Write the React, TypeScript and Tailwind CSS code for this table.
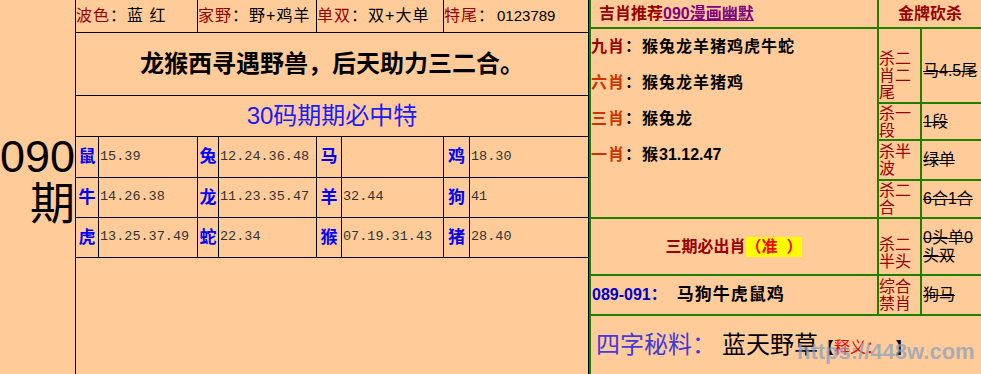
import React from "react";

type KillProps = {
  rowCls: string;
  labelCls: string;
  valueCls: string;
  label: string;
  value: string;
};

function Kill({ rowCls, labelCls, valueCls, label, value }: KillProps) {
  return (
    <div className={`flex ${rowCls}`}>
      <div
        className={`flex w-[43px] shrink-0 items-center border-r-2 border-[#1f7f00] text-[16px] leading-[17px] text-[#990000] ${labelCls}`}
      >
        <div className="w-full">{label}</div>
      </div>
      <div className={`flex flex-1 items-center pl-[1px] text-[16px] leading-[18px] line-through ${valueCls}`}>
        <div className="w-full">{value}</div>
      </div>
    </div>
  );
}

function TopCell({ label, value, last }: { label: string; value: React.ReactNode; last?: boolean }) {
  return (
    <div className={`flex items-center tracking-[1px] ${last ? "" : "border-r border-black"}`}>
      <span className="text-[#990000]">{label}</span>
      <span>：</span>
      {value}
    </div>
  );
}

const rows: [string, string, string, string, string, string, string, string][] = [
  ["鼠", "15.39", "兔", "12.24.36.48", "马", "", "鸡", "18.30"],
  ["牛", "14.26.38", "龙", "11.23.35.47", "羊", "32.44", "狗", "41"],
  ["虎", "13.25.37.49", "蛇", "22.34", "猴", "07.19.31.43", "猪", "28.40"],
];

export default function App() {
  return (
    <div className="relative flex h-[374px] w-[981px] overflow-hidden bg-[#ffcc99] font-['Liberation_Sans','Noto_Sans_CJK_SC',sans-serif] text-black">
      {/* issue number */}
      <div className="flex w-[75px] shrink-0 flex-col items-end justify-center pb-3 text-[45px] leading-[48px]">
        <div>090</div>
        <div>期</div>
      </div>

      {/* left table */}
      <div className="flex w-[514px] shrink-0 flex-col border-x border-black">
        <div className="grid h-[33px] grid-cols-[122px_119px_127px_1fr] border-b border-black text-[16px]">
          <TopCell label="波色" value={<span>蓝 红</span>} />
          <TopCell label="家野" value={<span>野+鸡羊</span>} />
          <TopCell label="单双" value={<span>双+大单</span>} />
          <TopCell label="特尾" value={<span className="ml-[2px] text-[15px] tracking-[0px]">0123789</span>} last />
        </div>
        <div className="flex h-[63px] items-center justify-center border-b border-black text-[24px] font-bold">
          龙猴西寻遇野兽，后天助力三二合。
        </div>
        <div className="flex h-[41px] items-center justify-center border-b border-black text-[24px] text-[#1a1aff]">
          30码期期必中特
        </div>
        {rows.map((r, i) => (
          <div
            key={i}
            className={`grid grid-cols-[23px_99px_21px_98px_25px_102px_26px_1fr] border-b border-black ${
              i === 0 ? "h-[41px]" : "h-[40px]"
            }`}
          >
            {r.map((c, j) =>
              j % 2 === 0 ? (
                <div
                  key={j}
                  className="flex items-center justify-center border-r border-black text-[17px] font-bold text-[#0000ff]"
                >
                  {c}
                </div>
              ) : (
                <div
                  key={j}
                  className={`flex items-center pl-[1px] font-['Liberation_Mono',monospace] text-[13.5px] text-[#333] ${
                    j === 7 ? "" : "border-r border-black"
                  }`}
                >
                  {c}
                </div>
              )
            )}
          </div>
        ))}
        <div className="flex-1" />
      </div>

      {/* right section */}
      <div className="flex flex-1 flex-col border-l-2 border-[#1f7f00]">
        <div className="flex h-[29px] border-b-2 border-[#1f7f00] text-[16px] font-bold">
          <div className="flex w-[288px] shrink-0 items-center border-r-2 border-[#1f7f00] pl-2">
            <span className="text-[#990000]">吉肖推荐</span>
            <span className="text-[#800080] underline">090漫画幽默</span>
          </div>
          <div className="flex flex-1 items-center justify-center text-[#990000]">金牌砍杀</div>
        </div>

        <div className="flex h-[190px] border-b-2 border-[#1f7f00]">
          <div className="flex w-[288px] shrink-0 flex-col border-r-2 border-[#1f7f00] text-[16px] font-bold tracking-[1px]">
            <div className="flex h-[36px] items-center">
              <span className="text-[#990000]">九肖</span>
              <span>：猴兔龙羊猪鸡虎牛蛇</span>
            </div>
            <div className="flex h-[36px] items-center">
              <span className="text-[#cc3300]">六肖</span>
              <span>：猴兔龙羊猪鸡</span>
            </div>
            <div className="flex h-[36px] items-center">
              <span className="text-[#cc3300]">三肖</span>
              <span>：猴兔龙</span>
            </div>
            <div className="flex h-[36px] items-center">
              <span className="text-[#cc3300]">一肖</span>
              <span>：猴</span>
              <span className="tracking-[0px]">31.12.47</span>
            </div>
          </div>
          <div className="flex flex-1 flex-col">
            <Kill
              rowCls="h-[75px] border-b-2 border-[#1f7f00]"
              labelCls="pt-[20px]"
              valueCls="pt-[10px]"
              label="杀二肖二尾"
              value="马4.5尾"
            />
            <Kill rowCls="h-[37px] border-b-2 border-[#1f7f00]" labelCls="" valueCls="" label="杀一段" value="1段" />
            <Kill rowCls="h-[40px] border-b-2 border-[#1f7f00]" labelCls="" valueCls="" label="杀半波" value="绿单" />
            <Kill rowCls="h-[36px]" labelCls="" valueCls="" label="杀二合" value="6合1合" />
          </div>
        </div>

        <div className="flex h-[57px] border-b-2 border-[#1f7f00]">
          <div className="flex w-[288px] shrink-0 items-center justify-center border-r-2 border-[#1f7f00] text-[16px] font-bold leading-[20px]">
            <span className="text-[#990000]">三期必出肖</span>
            <span className="bg-[#ffff00] text-[#ff0000]">（准&nbsp;&nbsp;）</span>
          </div>
          <div className="flex-1">
            <Kill rowCls="h-full" labelCls="pt-[12px]" valueCls="" label="杀二半头" value="0头单0头双" />
          </div>
        </div>

        <div className="flex h-[40px] border-b-2 border-[#1f7f00]">
          <div className="flex w-[288px] shrink-0 items-center border-r-2 border-[#1f7f00] pl-[1px] font-bold">
            <span className="text-[16px] text-[#0000cc]">089-091：</span>
            <span className="ml-[10px] text-[17px] tracking-[1px]">马狗牛虎鼠鸡</span>
          </div>
          <div className="flex-1">
            <Kill rowCls="h-full" labelCls="" valueCls="" label="综合禁肖" value="狗马" />
          </div>
        </div>

        <div className="flex flex-1 items-center pl-[5px]">
          <div className="flex items-baseline">
            <span className="text-[24px] text-[#4438e0]">四字秘料：</span>
            <span className="ml-[6px] text-[24px]">蓝天野草</span>
            <span className="text-[16px] font-bold">【</span>
            <span className="text-[16px] text-[#ee0000]">释义：</span>
            <span className="text-[16px] font-bold">&nbsp;&nbsp;&nbsp;】</span>
          </div>
        </div>
      </div>

      {/* watermark */}
      <div className="pointer-events-none absolute left-[797px] top-[339px] font-['Liberation_Sans',sans-serif] text-[22px] font-bold leading-[26px] text-[rgba(140,160,190,0.75)]">
        https://448w.com
      </div>
    </div>
  );
}
